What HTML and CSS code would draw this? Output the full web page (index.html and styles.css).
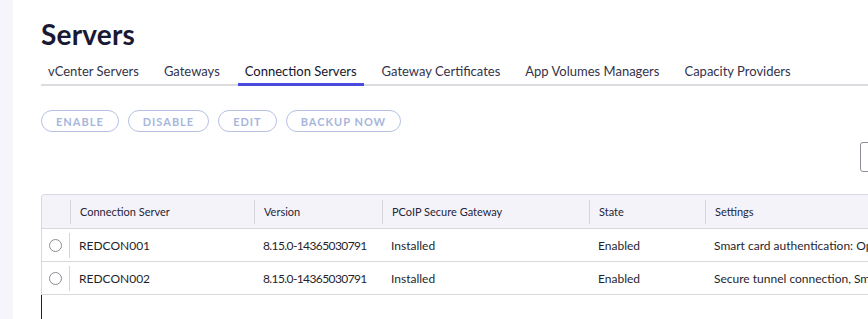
FILE: index.html
```html
<!DOCTYPE html>
<html lang="en">
<head>
    <meta charset="UTF-8">
    <title>Servers</title>
    <link rel="stylesheet" href="styles.css">
</head>
<body>
    <div class="side"></div>
    <div class="main">
        <h1 class="title">Servers</h1>

        <ul class="tabs">
            <li class="tab">vCenter Servers</li>
            <li class="tab">Gateways</li>
            <li class="tab active">Connection Servers</li>
            <li class="tab">Gateway Certificates</li>
            <li class="tab">App Volumes Managers</li>
            <li class="tab">Capacity Providers</li>
        </ul>

        <div class="actions">
            <button class="btn">Enable</button>
            <button class="btn">Disable</button>
            <button class="btn">Edit</button>
            <button class="btn">Backup Now</button>
        </div>

        <div class="filter-row">
            <div class="filter"></div>
        </div>

        <table class="grid">
            <colgroup>
                <col style="width: 28px">
                <col style="width: 184px">
                <col style="width: 128px">
                <col style="width: 207px">
                <col style="width: 116px">
                <col style="width: 340px">
            </colgroup>
            <thead>
                <tr>
                    <th class="sel"></th>
                    <th><div class="head">Connection Server</div></th>
                    <th><div class="head">Version</div></th>
                    <th><div class="head">PCoIP Secure Gateway</div></th>
                    <th><div class="head">State</div></th>
                    <th><div class="head">Settings</div></th>
                </tr>
            </thead>
            <tbody>
                <tr>
                    <td class="sel"><div class="radio-cell"><span class="radio"></span></div></td>
                    <td>REDCON001</td>
                    <td class="version">8.15.0-14365030791</td>
                    <td>Installed</td>
                    <td>Enabled</td>
                    <td>Smart card authentication: Optional</td>
                </tr>
                <tr>
                    <td class="sel"><div class="radio-cell"><span class="radio"></span></div></td>
                    <td>REDCON002</td>
                    <td class="version">8.15.0-14365030791</td>
                    <td>Installed</td>
                    <td>Enabled</td>
                    <td>Secure tunnel connection, Smart card authentication</td>
                </tr>
            </tbody>
        </table>
        <div class="grid-tail"></div>
    </div>
</body>
</html>
```

FILE: styles.css
```css
* {
    margin: 0;
    padding: 0;
    box-sizing: border-box;
}

body {
    display: flex;
    height: 100vh;
    overflow: hidden;
    background: #ffffff;
    font-family: "Lato", "Noto Sans", sans-serif;
    color: #1f1f2e;
}

.side {
    width: 13px;
    flex-shrink: 0;
    background: #f6f5fb;
}

.main {
    flex: 1;
    padding: 17px 0 0 28px;
    overflow: hidden;
}

.title {
    font-size: 28px;
    line-height: 34px;
    font-weight: 700;
    color: #191933;
    letter-spacing: 0.2px;
}

.tabs {
    list-style: none;
    display: flex;
    margin-top: 9px;
    border-bottom: 2px solid #dcdce0;
    white-space: nowrap;
}

.tab {
    padding: 3px 7px 4px;
    margin-right: 11px;
    font-size: 13px;
    line-height: 16px;
    color: #33334a;
    border-bottom: 3px solid transparent;
    margin-bottom: -2px;
}

.tab.active {
    color: #15152b;
    border-bottom-color: #4b4bdf;
}

.actions {
    display: flex;
    gap: 9px;
    margin-top: 24px;
}

.btn {
    height: 22px;
    padding: 0 14px;
    border: 1px solid #b6c1e4;
    border-radius: 11px;
    background: #ffffff;
    color: #a8b6dc;
    font-family: inherit;
    font-size: 11px;
    font-weight: 700;
    letter-spacing: 1px;
    text-transform: uppercase;
}

.filter-row {
    margin-top: 10px;
    height: 30px;
}

.filter {
    margin-left: 819px;
    width: 200px;
    height: 30px;
    border: 1px solid #8e8e96;
    border-radius: 3px;
}

.grid {
    margin-top: 22px;
    width: 1003px;
    table-layout: fixed;
    border-collapse: separate;
    border-spacing: 0;
    border-top: 1px solid #d8d8de;
    border-left: 1px solid #d8d8de;
    border-top-left-radius: 4px;
    font-size: 12px;
    color: #1f1f2e;
    white-space: nowrap;
}

.grid th {
    background: #f4f3f9;
    padding: 4px 0;
    height: 34px;
    text-align: left;
    font-weight: 400;
    font-size: 11px;
    color: #25253a;
    border-bottom: 1px solid #d8d8de;
}

.grid th:first-child {
    border-top-left-radius: 4px;
}

.head {
    border-left: 1px solid #d4d4da;
    line-height: 24px;
    padding-left: 9px;
}

.grid td {
    height: 33px;
    padding: 1px 9px 0;
    border-bottom: 1px solid #d8d8de;
    overflow: hidden;
}

.grid td.version {
    letter-spacing: -0.6px;
}

.grid td.sel {
    padding: 1px 0 0;
}

.radio-cell {
    height: 25px;
    border-right: 1px solid #d4d4da;
    display: flex;
    align-items: center;
    justify-content: center;
}

.radio {
    width: 13px;
    height: 13px;
    border: 1px solid #8d8d95;
    border-radius: 50%;
}

.grid-tail {
    height: 40px;
    border-left: 1px solid #222222;
}
```
